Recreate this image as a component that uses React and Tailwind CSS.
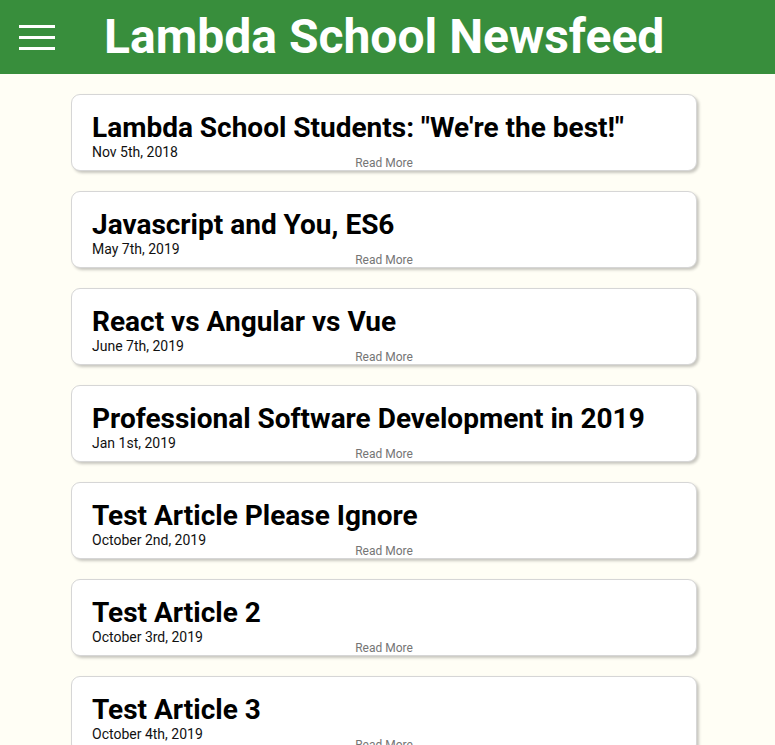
import React from 'react';

const articles = [
    { id: 1, title: 'Lambda School Students: "We\'re the best!"', date: 'Nov 5th, 2018' },
    { id: 2, title: 'Javascript and You, ES6', date: 'May 7th, 2019' },
    { id: 3, title: 'React vs Angular vs Vue', date: 'June 7th, 2019' },
    { id: 4, title: 'Professional Software Development in 2019', date: 'Jan 1st, 2019' },
    { id: 5, title: 'Test Article Please Ignore', date: 'October 2nd, 2019' },
    { id: 6, title: 'Test Article 2', date: 'October 3rd, 2019' },
    { id: 7, title: 'Test Article 3', date: 'October 4th, 2019' },
];

function Header() {
    return (
        <header className="h-[74px] bg-[#388e3c] flex items-center">
            <div className="ml-[19px] w-[36px] flex flex-col gap-[8px]">
                <span className="block h-[3px] bg-white" />
                <span className="block h-[3px] bg-white" />
                <span className="block h-[3px] bg-white" />
            </div>
            <h1 className="ml-[49px] text-[48px] font-bold text-white leading-[56px]">
                Lambda School Newsfeed
            </h1>
        </header>
    );
}

function Article({ article }) {
    return (
        <div className="w-[626px] bg-white border border-[#d6d6d6] rounded-[9px] shadow-[2px_2px_3px_rgba(0,0,0,0.22)] pt-[16px] px-[20px]">
            <h2 className="text-[28px] font-bold text-black leading-[33px]">{article.title}</h2>
            <p className="text-[14px] text-[#111] leading-[16px]">{article.date}</p>
            <p className="-mt-[4px] text-[12px] text-[#757575] leading-[14px] text-center">Read More</p>
        </div>
    );
}

export default function App() {
    return (
        <div className="min-h-screen bg-[#fffef5] font-['Roboto',sans-serif]">
            <Header />
            <div className="pl-[71px] pt-[20px] pb-[20px] flex flex-col gap-[20px]">
                {articles.map(a => (
                    <Article key={a.id} article={a} />
                ))}
            </div>
        </div>
    );
}
